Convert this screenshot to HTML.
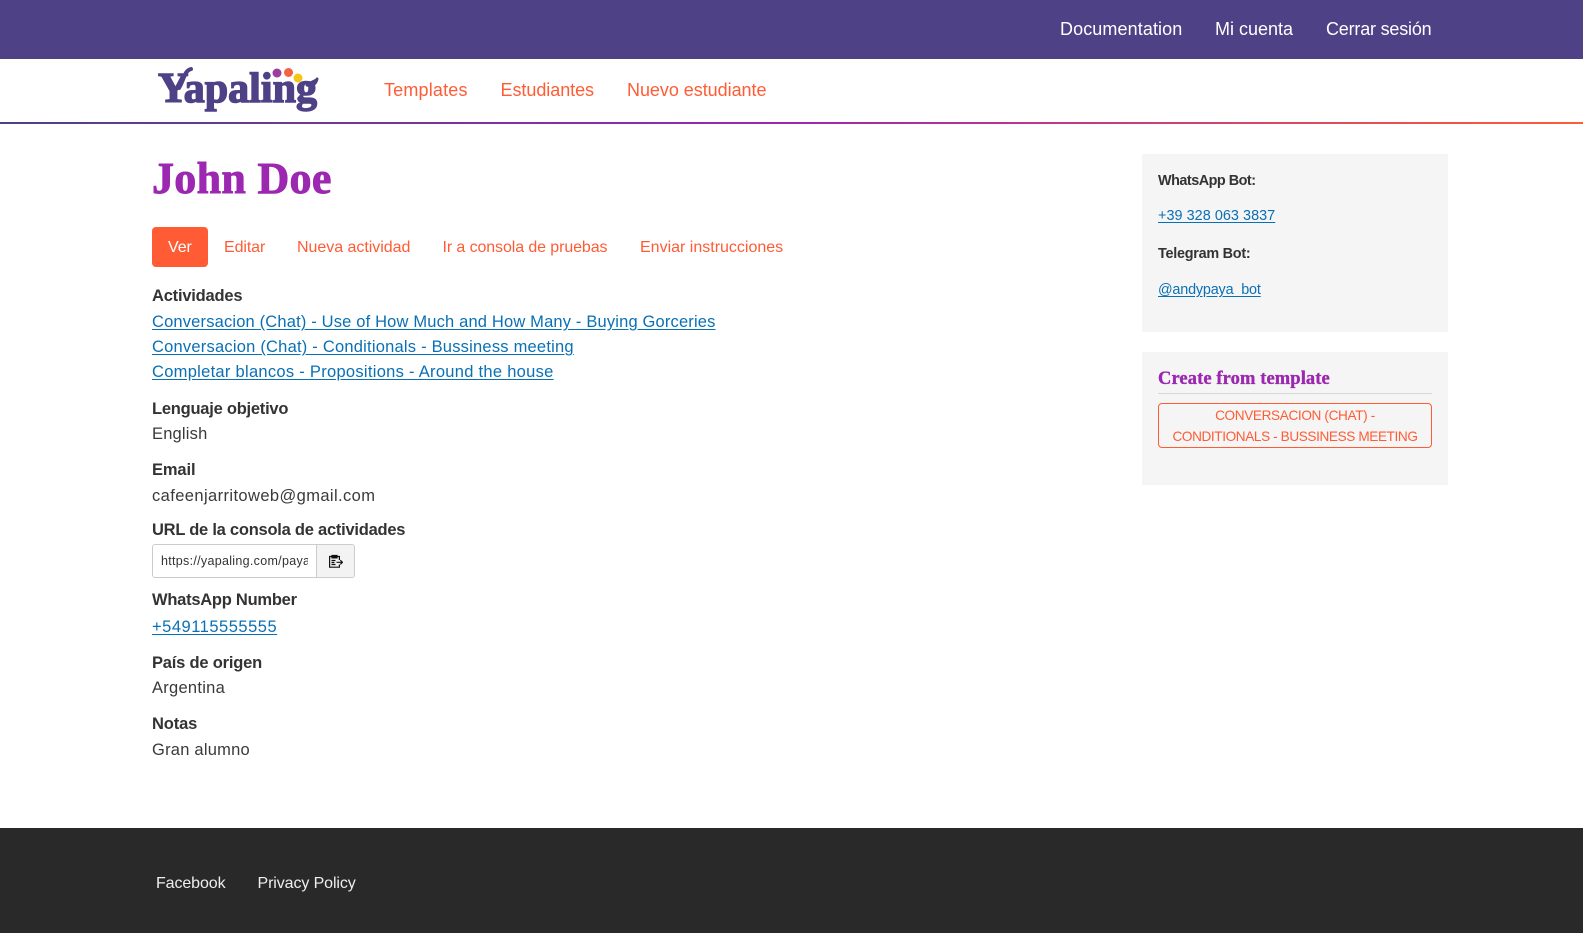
<!DOCTYPE html>
<html lang="es"><head><meta charset="utf-8"><title>John Doe - Yapaling</title>
<style>
html,body{margin:0;padding:0}
body{width:1583px;height:933px;position:relative;overflow:hidden;background:#fff;font-family:"Liberation Sans",sans-serif;color:#333}
.t{position:absolute;white-space:nowrap;line-height:20px;height:20px;text-decoration:none}
a.l{color:#0a70b5;text-decoration:underline;text-underline-offset:2px}
.b{font-weight:700;font-size:16.5px;letter-spacing:-.12px;color:#333}
.p{font-size:16.5px;letter-spacing:.05px;color:#3a3a3a}
.top{color:#fff;font-size:18px;letter-spacing:-.2px}
.nav{color:#ff5c35;font-size:18px;letter-spacing:-.15px}
.tab{color:#ff5c35;font-size:16px;letter-spacing:-.1px}
.box{position:absolute;background:#f5f5f5}
.foot{color:#eee;font-size:16px;letter-spacing:-.1px}
.side{font-size:14.4px;letter-spacing:-.1px}
.c{font-size:13.6px;color:#ff5c35;text-align:center;left:1158px;width:274px}
</style></head><body>
<div style="position:absolute;left:0;top:0;width:1583px;height:59px;background:#4f4186"></div>
<a class="t top" style="left:1060px;top:19px;letter-spacing:.1px">Documentation</a>
<a class="t top" style="left:1215px;top:19px;letter-spacing:0">Mi cuenta</a>
<a class="t top" style="left:1326px;top:19px">Cerrar sesión</a>

<svg style="position:absolute;left:155px;top:64px" width="170" height="56" viewBox="0 0 170 56">
<text x="3" y="38" font-family="'Liberation Serif',serif" font-weight="700" font-size="42" fill="#4f4186" stroke="#4f4186" stroke-width="1.4" textLength="159" lengthAdjust="spacingAndGlyphs">Yapaling</text>
<path d="M24 24C30 14 29 7 36 5" fill="none" stroke="#4f4186" stroke-width="4" stroke-linecap="round"/>
<path d="M152 21Q160 23 162 15" fill="none" stroke="#4f4186" stroke-width="3" stroke-linecap="round"/>
<circle cx="122" cy="9" r="4.5" fill="#9c3d9f"/><circle cx="133.5" cy="8.5" r="4.5" fill="#f4623f"/><circle cx="143" cy="14" r="4.5" fill="#f5c518"/>
</svg>
<a class="t nav" style="left:384px;top:80px;letter-spacing:.18px">Templates</a>
<a class="t nav" style="left:500.5px;top:80px;letter-spacing:-.05px">Estudiantes</a>
<a class="t nav" style="left:627px;top:80px;letter-spacing:-.04px">Nuevo estudiante</a>
<div style="position:absolute;left:0;top:122px;width:1583px;height:2px;background:linear-gradient(90deg,#4f4186 0%,#9c27b0 50%,#ff5c35 100%)"></div>

<h1 class="t" style="margin:0;left:152px;top:159px;height:40px;line-height:40px;font-family:'Liberation Serif',serif;font-size:44px;font-weight:700;color:#9c27b0;letter-spacing:.3px;-webkit-text-stroke:.9px #9c27b0">John Doe</h1>

<div style="position:absolute;left:152px;top:227px;width:56px;height:40px;background:#ff5c35;border-radius:4px"></div>
<a class="t tab" style="left:168px;top:238px;color:#fff">Ver</a>
<a class="t tab" style="left:224px;top:238px">Editar</a>
<a class="t tab" style="left:297px;top:238px;letter-spacing:-.03px">Nueva actividad</a>
<a class="t tab" style="left:442.5px;top:238px">Ir a consola de pruebas</a>
<a class="t tab" style="left:640px;top:238px;letter-spacing:0">Enviar instrucciones</a>

<div class="t b" style="left:152px;top:286px;letter-spacing:-.21px">Actividades</div>
<a class="t p l" style="left:152px;top:312px;letter-spacing:.167px">Conversacion (Chat) - Use of How Much and How Many - Buying Gorceries</a>
<a class="t p l" style="left:152px;top:337px;letter-spacing:.22px">Conversacion (Chat) - Conditionals - Bussiness meeting</a>
<a class="t p l" style="left:152px;top:362px;letter-spacing:.285px">Completar blancos - Propositions - Around the house</a>
<div class="t b" style="left:152px;top:399px;letter-spacing:-.24px">Lenguaje objetivo</div>
<div class="t p" style="left:152px;top:424px;letter-spacing:.19px">English</div>
<div class="t b" style="left:152px;top:460px">Email</div>
<div class="t p" style="left:152px;top:486px;letter-spacing:.4px">cafeenjarritoweb@gmail.com</div>
<div class="t b" style="left:152px;top:520px;letter-spacing:-.245px">URL de la consola de actividades</div>

<div style="position:absolute;left:152px;top:544px;width:203px;height:34px;box-sizing:border-box;border:1px solid #ccc;border-radius:3px;background:#fff;overflow:hidden">
 <div style="position:absolute;left:8px;top:0;width:147px;height:32px;line-height:33px;font-size:12.5px;letter-spacing:.3px;color:#333;overflow:hidden;white-space:nowrap">https://yapaling.com/payaso/console</div>
 <div style="position:absolute;left:163px;top:0;width:38px;height:32px;background:#f3f3f3;border-left:1px solid #ccc">
  <svg style="position:absolute;left:11px;top:9px" width="15" height="14" viewBox="0 0 15 14" fill="none" stroke="#111" stroke-width="1.2">
   <path d="M4 2.5H1.6v10.7h9.8V10.5M11.4 6V2.5H9"/><path d="M4 1.5h5v2.4H4z" fill="#111"/><path d="M3.5 6.5h4M3.5 8.5h3M3.5 10.5h4"/><path d="M8.5 8.3h6M12.3 6.2l2.2 2.1-2.2 2.1"/>
  </svg>
 </div>
</div>

<div class="t b" style="left:152px;top:590px;letter-spacing:-.25px">WhatsApp Number</div>
<a class="t p l" style="left:152px;top:617px;letter-spacing:.51px">+549115555555</a>
<div class="t b" style="left:152px;top:653px;letter-spacing:-.2px">País de origen</div>
<div class="t p" style="left:152px;top:678px;letter-spacing:.27px">Argentina</div>
<div class="t b" style="left:152px;top:714px">Notas</div>
<div class="t p" style="left:152px;top:740px;letter-spacing:.23px">Gran alumno</div>

<div class="box" style="left:1142px;top:154px;width:306px;height:178px"></div>
<div class="t side" style="left:1158px;top:171px;font-weight:700;letter-spacing:-.49px">WhatsApp Bot:</div>
<a class="t side l" style="left:1158px;top:206px;letter-spacing:.05px">+39 328 063 3837</a>
<div class="t side" style="left:1158px;top:244px;font-weight:700;letter-spacing:-.25px">Telegram Bot:</div>
<a class="t side l" style="left:1158px;top:280px;letter-spacing:-.18px">@andypaya_bot</a>

<div class="box" style="left:1142px;top:352px;width:306px;height:133px"></div>
<div class="t" style="left:1158px;top:369px;font-family:'Liberation Serif',serif;font-weight:700;font-size:18.5px;color:#9c27b0;letter-spacing:.1px;-webkit-text-stroke:.35px #9c27b0">Create from template</div>
<div style="position:absolute;left:1158px;top:393px;width:274px;height:1px;background:#d8d8d8"></div>
<div style="position:absolute;left:1158px;top:403px;width:274px;height:45px;box-sizing:border-box;border:1px solid #ff5c35;border-radius:4px"></div>
<div class="t c" style="top:406px;letter-spacing:-.36px">CONVERSACION (CHAT) -</div>
<div class="t c" style="top:427px;letter-spacing:-.39px">CONDITIONALS - BUSSINESS MEETING</div>

<div style="position:absolute;left:0;top:828px;width:1583px;height:105px;background:#292929"></div>
<a class="t foot" style="left:156px;top:874px">Facebook</a>
<a class="t foot" style="left:257.5px;top:874px">Privacy Policy</a>
</body></html>
